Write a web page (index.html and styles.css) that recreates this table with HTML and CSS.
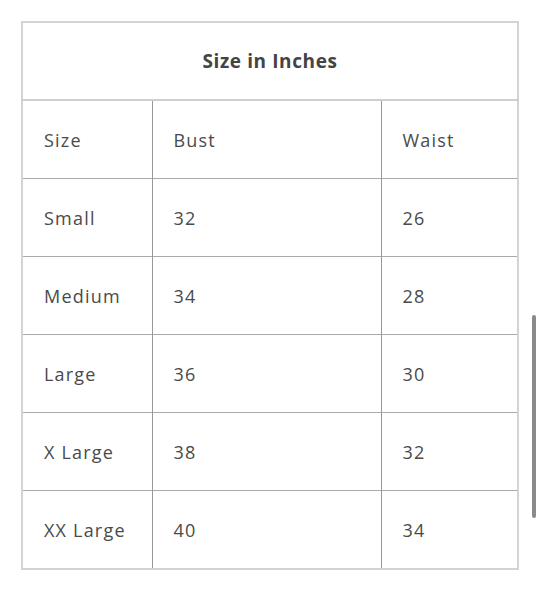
FILE: index.html
```html
<!DOCTYPE html>
<html>
<head>
<meta charset="utf-8">
<link rel="stylesheet" href="styles.css">
</head>
<body>
<div class="page">
  <table class="chart">
    <colgroup>
      <col class="c1"><col class="c2"><col class="c3">
    </colgroup>
    <thead>
      <tr><th colspan="3" class="title">Size in Inches</th></tr>
    </thead>
    <tbody>
      <tr><td>Size</td><td>Bust</td><td>Waist</td></tr>
      <tr><td>Small</td><td>32</td><td>26</td></tr>
      <tr><td>Medium</td><td>34</td><td>28</td></tr>
      <tr><td>Large</td><td>36</td><td>30</td></tr>
      <tr><td>X Large</td><td>38</td><td>32</td></tr>
      <tr><td>XX Large</td><td>40</td><td>34</td></tr>
    </tbody>
  </table>
  <div class="scrollbar"></div>
</div>
</body>
</html>
```
FILE: styles.css
```css
html, body {
  margin: 0;
  padding: 0;
  background: #fff;
}
.page {
  position: relative;
  width: 540px;
  height: 600px;
  padding: 21px 0 0 21px;
  box-sizing: border-box;
  font-family: "Open Sans", "Noto Sans", sans-serif;
  color: #444;
}
.chart {
  border-collapse: collapse;
  width: 496px;
  table-layout: fixed;
  border: 2px solid #d3d3d3;
}
.c1 { width: 130px; }
.c2 { width: 229px; }
.c3 { width: 137px; }
.title {
  height: 76px;
  font-size: 19px;
  font-weight: 700;
  letter-spacing: 0.6px;
  text-align: center;
  border-bottom: 2px solid #cfcfcf;
  padding: 0;
  color: #444;
}
td {
  height: 77px;
  padding: 0 0 0 21px;
  font-size: 18px;
  letter-spacing: 1.2px;
  border-top: 1px solid #aaa;
  border-left: 1px solid #999;
  vertical-align: middle;
  color: #4a4a4a;
}
tbody tr:first-child td {
  border-top: none;
}
td:first-child {
  border-left: none;
}
.scrollbar {
  position: absolute;
  left: 532px;
  top: 315px;
  width: 4px;
  height: 203px;
  border-radius: 2px;
  background: #8a8a8a;
}
```
